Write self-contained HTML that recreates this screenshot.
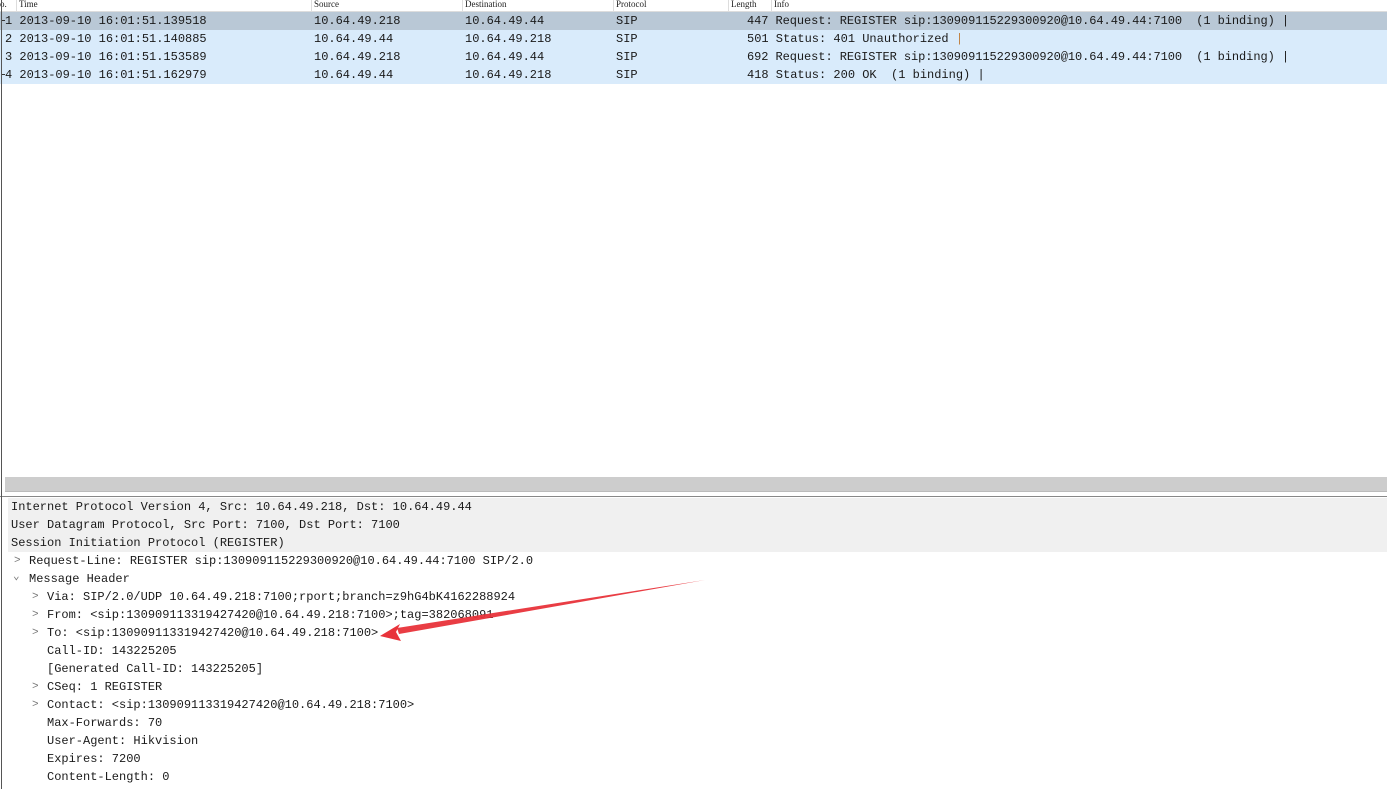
<!DOCTYPE html>
<html><head><meta charset="utf-8"><style>
body{margin:0;width:1387px;height:789px;background:#fff;position:relative;overflow:hidden;font-family:"Liberation Mono",monospace;font-size:12px;color:#1a1a1a}
.t{position:absolute;white-space:pre;line-height:18px}
.h{position:absolute;top:0;height:11px;font-family:"Liberation Serif",serif;font-size:9px;line-height:9px;color:#222;white-space:pre}
.row{position:absolute;left:0;width:1387px;height:18px;background:#d9ebfb}
.ch{position:absolute;color:#777;font-size:11px;line-height:18px}
</style></head><body>
<div style="position:absolute;left:0;top:0;width:1387px;height:11px;background:#fff;border-bottom:1px solid #ddd"></div>
<div class="h" style="left:0">o.</div>
<div class="h" style="left:19px">Time</div>
<div class="h" style="left:314px">Source</div>
<div class="h" style="left:465px">Destination</div>
<div class="h" style="left:616px">Protocol</div>
<div class="h" style="left:731px">Length</div>
<div class="h" style="left:774px">Info</div>
<div style="position:absolute;left:16px;top:0;width:1px;height:11px;background:#ddd"></div>
<div style="position:absolute;left:311px;top:0;width:1px;height:11px;background:#ddd"></div>
<div style="position:absolute;left:462px;top:0;width:1px;height:11px;background:#ddd"></div>
<div style="position:absolute;left:613px;top:0;width:1px;height:11px;background:#ddd"></div>
<div style="position:absolute;left:728px;top:0;width:1px;height:11px;background:#ddd"></div>
<div style="position:absolute;left:771px;top:0;width:1px;height:11px;background:#ddd"></div>

<div class="row" style="top:12px;background:#b9c8d6"></div>
<div class="row" style="top:30px"></div>
<div class="row" style="top:48px"></div>
<div class="row" style="top:66px"></div>

<div class="t" style="left:5px;top:12px">1 2013-09-10 16:01:51.139518</div>
<div class="t" style="left:5px;top:30px">2 2013-09-10 16:01:51.140885</div>
<div class="t" style="left:5px;top:48px">3 2013-09-10 16:01:51.153589</div>
<div class="t" style="left:5px;top:66px">4 2013-09-10 16:01:51.162979</div>
<div style="position:absolute;left:1px;top:20px;width:4px;height:1px;background:#333"></div>
<div style="position:absolute;left:1px;top:74px;width:4px;height:1px;background:#333"></div>
<div class="t" style="left:314px;top:12px">10.64.49.218</div><div class="t" style="left:465px;top:12px">10.64.49.44</div><div class="t" style="left:616px;top:12px">SIP</div>
<div class="t" style="left:314px;top:30px">10.64.49.44</div><div class="t" style="left:465px;top:30px">10.64.49.218</div><div class="t" style="left:616px;top:30px">SIP</div>
<div class="t" style="left:314px;top:48px">10.64.49.218</div><div class="t" style="left:465px;top:48px">10.64.49.44</div><div class="t" style="left:616px;top:48px">SIP</div>
<div class="t" style="left:314px;top:66px">10.64.49.44</div><div class="t" style="left:465px;top:66px">10.64.49.218</div><div class="t" style="left:616px;top:66px">SIP</div>
<div class="t" style="left:747px;top:12px;letter-spacing:-0.07px">447 Request: REGISTER sip:130909115229300920@10.64.49.44:7100  (1 binding) |</div>
<div class="t" style="left:747px;top:30px">501 Status: 401 Unauthorized <span style="color:#c08040">|</span></div>
<div class="t" style="left:747px;top:48px;letter-spacing:-0.07px">692 Request: REGISTER sip:130909115229300920@10.64.49.44:7100  (1 binding) |</div>
<div class="t" style="left:747px;top:66px">418 Status: 200 OK  (1 binding) |</div>

<div style="position:absolute;left:5px;top:477px;width:1382px;height:14px;background:#cdcdcd;border-bottom:1px solid #bbb"></div>
<div style="position:absolute;left:0;top:496px;width:1387px;height:1px;background:#888"></div>
<div style="position:absolute;left:8px;top:498px;width:1379px;height:54px;background:#f0f0f0"></div>
<div style="position:absolute;left:1px;top:0;width:1px;height:789px;background:#555"></div>

<div class="t" style="left:11px;top:498px">Internet Protocol Version 4, Src: 10.64.49.218, Dst: 10.64.49.44</div>
<div class="t" style="left:11px;top:516px">User Datagram Protocol, Src Port: 7100, Dst Port: 7100</div>
<div class="t" style="left:11px;top:534px">Session Initiation Protocol (REGISTER)</div>
<span class="ch" style="left:14px;top:552px">&gt;</span><div class="t" style="left:29px;top:552px">Request-Line: REGISTER sip:130909115229300920@10.64.49.44:7100 SIP/2.0</div>
<span class="ch" style="left:13px;top:568px">&#8964;</span><div class="t" style="left:29px;top:570px">Message Header</div>
<span class="ch" style="left:32px;top:588px">&gt;</span><div class="t" style="left:47px;top:588px">Via: SIP/2.0/UDP 10.64.49.218:7100;rport;branch=z9hG4bK4162288924</div>
<span class="ch" style="left:32px;top:606px">&gt;</span><div class="t" style="left:47px;top:606px">From: &lt;sip:130909113319427420@10.64.49.218:7100&gt;;tag=382068091</div>
<span class="ch" style="left:32px;top:624px">&gt;</span><div class="t" style="left:47px;top:624px">To: &lt;sip:130909113319427420@10.64.49.218:7100&gt;</div>
<div class="t" style="left:47px;top:642px">Call-ID: 143225205</div>
<div class="t" style="left:47px;top:660px">[Generated Call-ID: 143225205]</div>
<span class="ch" style="left:32px;top:678px">&gt;</span><div class="t" style="left:47px;top:678px">CSeq: 1 REGISTER</div>
<span class="ch" style="left:32px;top:696px">&gt;</span><div class="t" style="left:47px;top:696px">Contact: &lt;sip:130909113319427420@10.64.49.218:7100&gt;</div>
<div class="t" style="left:47px;top:714px">Max-Forwards: 70</div>
<div class="t" style="left:47px;top:732px">User-Agent: Hikvision</div>
<div class="t" style="left:47px;top:750px">Expires: 7200</div>
<div class="t" style="left:47px;top:768px">Content-Length: 0</div>

<svg style="position:absolute;left:0;top:0" width="1387" height="789">
<polygon points="705,580 397,628 399,634" fill="#e8333a" opacity="0.95"/>
<polygon points="380,636 400,624 396,632 401,641" fill="#e8333a"/>
</svg>
</body></html>
